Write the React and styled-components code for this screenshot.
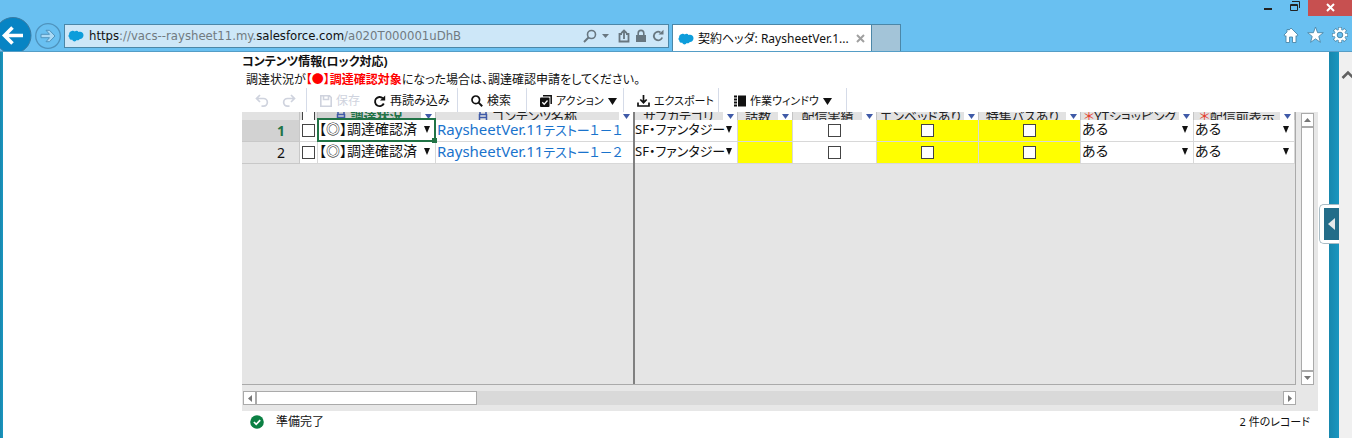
import React from "react";
import styled, { createGlobalStyle, css } from "styled-components";

const GlobalStyle = createGlobalStyle`
  *, *::before, *::after { box-sizing: border-box; }
  body {
    margin: 0;
    background: #fff;
    color: #111;
    font-family: "Noto Sans", "Noto Sans CJK JP", sans-serif;
    font-size: 12px;
    font-feature-settings: "palt";
  }
  button, select, input { font: inherit; font-feature-settings: inherit; color: inherit; }
  button { padding: 0; border: 0; background: none; display: flex; align-items: center; cursor: pointer; }
  svg { flex: none; }
`;

/* ---------- browser frame ---------- */

const Shell = styled.div`
  min-height: 100vh;
  display: flex;
  flex-direction: column;
`;

const TopBar = styled.header`
  height: 52px;
  display: flex;
  justify-content: space-between;
  background: #69c0f1;
  border-bottom: 1px solid #559dc6;
  overflow: hidden;
`;

const Navigation = styled.div`
  display: flex;
  padding-top: 17px;
`;

const BackButton = styled.button`
  width: 32px;
  height: 38px;
`;

const ForwardButton = styled.button`
  width: 32px;
  height: 38px;
  padding-left: 2px;
`;

const AddressBar = styled.div`
  width: 605px;
  height: 24px;
  margin-top: 7px;
  padding: 0 4px 0 3px;
  display: flex;
  align-items: center;
  gap: 5px;
  border: 1px solid #4b87a8;
  background: #cde7f8;
`;

const Url = styled.div`
  flex: 1;
  font-family: "DejaVu Sans Condensed", "Noto Sans", sans-serif;
  font-size: 13px;
  line-height: 22px;
  white-space: nowrap;
  color: #717a80;
  outline: none;
`;

const Strong = styled.span`
  color: #111;
`;

const AddressTools = styled.div`
  display: flex;
  align-items: center;
  gap: 5px;
`;

const Tab = styled.div`
  width: 200px;
  height: 28px;
  margin: 7px 0 0 3px;
  padding: 0 6px 0 5px;
  display: flex;
  align-items: center;
  gap: 4px;
  background: #fff;
  border: 1px solid #4b87a8;
  border-bottom: 0;
  font-size: 12px;
  line-height: 20px;
  white-space: nowrap;
`;

const TabTitle = styled.span`
  flex: 1;
`;

const NewTab = styled.button`
  width: 29px;
  height: 28px;
  margin-top: 7px;
  background: #a3c4d8;
  border: 1px solid #4b87a8;
  border-width: 1px 1px 0 0;
`;

const WindowArea = styled.div`
  display: flex;
  flex-direction: column;
  align-items: flex-end;
  gap: 10px;
`;

const WindowButtons = styled.div`
  display: flex;
  height: 16px;
`;

const WindowButton = styled.button`
  width: ${(p) => (p.$close ? 44 : 26)}px;
  height: 16px;
  padding-bottom: 2px;
  justify-content: center;
  background: ${(p) => (p.$close ? "#c75050" : "transparent")};
`;

const Shortcuts = styled.div`
  display: flex;
  gap: 8px;
  padding-right: 4px;
`;

const Body = styled.div`
  flex: 1;
  display: flex;
`;

const Edge = styled.div`
  width: ${(p) => p.$width}px;
  flex: none;
  position: relative;
  background: linear-gradient(90deg, #1787ad, #1a96c0);
`;

const PageScroll = styled.div`
  width: 13px;
  flex: none;
  padding-top: 15px;
  background: #f0f0f0;
`;

const SideHandle = styled.button`
  position: absolute;
  top: 152px;
  right: 0;
  width: 20px;
  height: 40px;
  padding: 4px 0 4px 4px;
  background: #fff;
  border: 1px solid #a9bcc5;
  border-right: 0;
  border-radius: 5px 0 0 5px;
`;

const HandleFace = styled.span`
  width: 15px;
  height: 32px;
  display: flex;
  align-items: center;
  justify-content: center;
  background: #236d89;
`;

/* ---------- page ---------- */

const Main = styled.main`
  flex: 1;
  min-width: 0;
  padding: 0 11px 0 239px;
  display: flex;
  flex-direction: column;
`;

const Title = styled.h1`
  margin: 0;
  padding-top: 1px;
  font-size: 12px;
  line-height: 18px;
  font-weight: 700;
`;

const Note = styled.p`
  margin: 0;
  padding-left: 4px;
  font-size: 12px;
  line-height: 17px;
`;

const Alert = styled.strong`
  color: #f00;
`;

const Toolbar = styled.div`
  height: 24px;
  display: flex;
`;

const ToolGroup = styled.div`
  width: ${(p) => p.$width}px;
  padding: 2px 0 0 13px;
  display: flex;
  align-items: center;
  gap: 13px;
  border-right: 1px solid #d5dbe8;
`;

const Tool = styled.button`
  gap: 4px;
  font-size: ${(p) => (p.$compact ? 11 : 12)}px;
  line-height: 18px;
  white-space: nowrap;
  color: ${(p) => (p.disabled ? "#cfd3de" : "#111")};
`;

const Sheet = styled.section`
  flex: 1;
  display: grid;
  grid-template-columns: 1fr 22px;
  grid-template-rows: 1fr 26px;
  background: #e7e7e7;
`;

const Viewport = styled.div`
  position: relative;
  overflow: hidden;
  border-right: 1px solid #aaa;
  border-bottom: 1px solid #aaa;
  background: #e5e5e5;
`;

const FreezeLine = styled.div`
  position: absolute;
  top: 0;
  bottom: 0;
  left: 391px;
  width: 2px;
  background: #808080;
`;

const Table = styled.table`
  width: 100%;
  table-layout: fixed;
  border-collapse: separate;
  border-spacing: 0;
  font-size: 14px;
`;

const Col = styled.col`
  width: ${(p) => (p.$width ? p.$width + "px" : "auto")};
`;

const HeadCell = styled.th`
  padding: 0;
  font-weight: 400;
  background: ${(p) => (p.$active ? "#d2d2d2" : "#e2e2e2")};
  color: ${(p) => (p.$active ? "#217346" : "#222")};
  border-right: 1px solid #c4c4c4;
`;

const HeadClip = styled.div`
  height: 8px;
  display: flex;
  align-items: center;
  overflow: hidden;
`;

const HeadText = styled.span`
  flex: 1;
  display: flex;
  align-items: center;
  justify-content: center;
  gap: 4px;
  font-size: 13px;
  line-height: 20px;
  font-weight: ${(p) => (p.$active ? 700 : 400)};
  white-space: nowrap;
`;

const Required = styled.span`
  color: #e5402f;
  margin-right: -4px;
`;

const FilterButton = styled.button`
  width: 14px;
  height: 8px;
  flex: none;
  justify-content: center;
  background: #fff;
`;

const cellLine = css`
  height: 22px;
  padding: 0;
  border-right: 1px solid #d8d8d8;
  border-bottom: 1px solid #d8d8d8;
`;

const RowHead = styled.th`
  ${cellLine}
  padding-right: 14px;
  text-align: right;
  font-weight: ${(p) => (p.$active ? 700 : 400)};
  color: ${(p) => (p.$active ? "#217346" : "#111")};
  background: ${(p) => (p.$active ? "#d2d2d2" : "#e4e4e4")};
  border-color: #c8c8c8;
  line-height: 20px;
`;

const Cell = styled.td`
  ${cellLine}
  position: relative;
  vertical-align: ${(p) => (p.$center ? "middle" : "top")};
  background: ${(p) => (p.$yellow ? "#ff0" : "#fff")};
  line-height: 18px;
  white-space: nowrap;
`;

const Selection = styled.span`
  position: absolute;
  z-index: 1;
  inset: -2px -1px -1px -1px;
  border: 2px solid #217346;
  pointer-events: none;
  &::after {
    content: "";
    position: absolute;
    right: -3px;
    bottom: -3px;
    width: 5px;
    height: 5px;
    background: #217346;
  }
`;

const Picker = styled.label`
  display: flex;
  align-items: center;
  padding-right: 5px;
`;

const Select = styled.select`
  flex: 1;
  min-width: 0;
  height: 18px;
  padding: 0 0 0 1px;
  appearance: none;
  border: 0;
  background: none;
  font-size: ${(p) => (p.$compact ? 13 : 14)}px;
  line-height: 18px;
  outline: none;
`;

const Check = styled.input`
  appearance: none;
  display: block;
  width: 13px;
  height: 13px;
  margin: 0 auto;
  flex: none;
  border: 1px solid #444;
  background: #fff;
`;

const RecordLink = styled.a`
  display: block;
  padding-left: 1px;
  font-size: 13px;
  color: #1a73cc;
  text-decoration: none;
`;

const Latin = styled.span`
  font-size: 15px;
`;

const VBar = styled.div`
  width: 13px;
  margin: 1px 0 0 5px;
  display: flex;
  flex-direction: column;
`;

const HBar = styled.div`
  height: 14px;
  margin: 6px 0 0 1px;
  display: flex;
  background: #d9d9d9;
`;

const ScrollButton = styled.button`
  width: 13px;
  height: 14px;
  flex: none;
  justify-content: center;
  background: #fff;
  border: 1px solid #aaa;
`;

const Thumb = styled.div`
  flex: ${(p) => (p.$width ? "none" : 1)};
  width: ${(p) => (p.$width ? p.$width + "px" : "auto")};
  background: #fff;
  border: 1px solid #aaa;
`;

const Spacer = styled.div`
  flex: 1;
`;

const Status = styled.footer`
  height: 27px;
  padding: 0 8px 6px;
  display: flex;
  align-items: center;
  gap: 12px;
  line-height: 18px;
`;

const RecordCount = styled.span`
  font-size: 11px;
`;

/* ---------- icons ---------- */

const Triangle = ({ dir = "down", w = 8, h = 6, fill = "#111" }) => {
  const d = {
    down: `M0 0H${w}L${w / 2} ${h}Z`,
    up: `M0 ${h}H${w}L${w / 2} 0Z`,
    left: `M${w} 0V${h}L0 ${h / 2}Z`,
    right: `M0 0V${h}L${w} ${h / 2}Z`,
  }[dir];
  return (
    <svg width={w} height={h} viewBox={`0 0 ${w} ${h}`} aria-hidden="true">
      <path d={d} fill={fill} />
    </svg>
  );
};

const Cloud = () => (
  <svg width="16" height="12" viewBox="0 0 16 12" aria-hidden="true">
    <path
      fill="#0d9ddb"
      d="M3.8 1C5 .4 6.200.9 6.800 1.500 8 .5 9.800.7 10.500 2 13.300 1 15.500 2.800 15.500 5.200S13.400 9.200 11.800 8.900C11 10.300 9.700 10.400 8.700 10 7.800 12 5 11.800 4.300 9.800 2.500 10 1.300 9 1.300 7.500.2 6.800.2 5.200 1.200 4.300.8 2.800 2 1.200 3.800 1Z"
    />
  </svg>
);

const BackIcon = () => (
  <svg width="32" height="38" viewBox="0 0 32 38" aria-hidden="true">
    <circle cx="13" cy="18.500" r="18" fill="#0784c4" stroke="#3a7ba3" />
    <path d="M23 18.500H5M12.500 10.500L4.500 18.500L12.500 26.500" fill="none" stroke="#fff" strokeWidth="3.600" />
  </svg>
);

const ForwardIcon = () => (
  <svg width="28" height="28" viewBox="0 0 28 28" aria-hidden="true">
    <circle cx="14" cy="14" r="12.300" fill="none" stroke="#4f93bd" strokeWidth="1.300" />
    <path
      d="M7 12.300H15.500L12 8.300H15.500L21 14L15.500 19.700H12L15.500 15.700H7Z"
      fill="#a9d9f5"
      stroke="#4f93bd"
    />
  </svg>
);

const gray = "#687780";

const AddressIcons = () => (
  <AddressTools>
    <svg width="14" height="14" viewBox="0 0 14 14" aria-hidden="true">
      <circle cx="8.500" cy="5.500" r="4" fill="none" stroke={gray} strokeWidth="1.600" />
      <path d="M5.500 8.500L1 13" stroke={gray} strokeWidth="2" />
    </svg>
    <Triangle w={7} h={4} fill={gray} />
    <svg width="16" height="14" viewBox="0 0 16 14" aria-hidden="true">
      <path d="M8 5H5.500V12.500H14.500V5H12M10 10V2M7.300 4.200L10 1.500L12.700 4.200" fill="none" stroke={gray} strokeWidth="1.800" />
    </svg>
    <svg width="12" height="14" viewBox="0 0 12 14" aria-hidden="true">
      <path d="M3.200 6V4.200A2.800 2.800 0 0 1 8.800 4.200V6" fill="none" stroke={gray} strokeWidth="1.600" />
      <rect x="1" y="6" width="10" height="7" fill={gray} />
    </svg>
    <svg width="12" height="14" viewBox="0 0 12 14" aria-hidden="true">
      <path d="M8.500 3.400A4.300 4.300 0 1 0 10.200 8.500" fill="none" stroke={gray} strokeWidth="1.800" />
      <path d="M6.500 5.500H11.500V.8Z" fill={gray} />
    </svg>
  </AddressTools>
);

const HomeIcon = () => (
  <svg width="16" height="18" viewBox="0 0 16 18" aria-hidden="true">
    <path
      d="M8 2L15 9L14 10.500L13 9.700V16.500H9.500V11H6.500V16.500H3V9.700L2 10.500L1 9L4 6V3.500H6V4.200Z"
      fill="#fff"
      stroke="#4b87a8"
      strokeWidth=".9"
    />
  </svg>
);

const StarIcon = () => (
  <svg width="17" height="18" viewBox="0 0 17 18" aria-hidden="true">
    <path
      d="M8.500 1L10.600 6.700H16.300L11.800 10.400L13.400 16.300L8.500 12.900L3.600 16.300L5.200 10.400L.7 6.700H6.400Z"
      fill="#fff"
      stroke="#4b87a8"
      strokeWidth=".9"
    />
  </svg>
);

const GearIcon = () => (
  <svg width="16" height="18" viewBox="0 0 16 18" aria-hidden="true">
    <g transform="translate(8 9)">
      {[
        ["#4b87a8", 4, 7.900],
        ["#fff", 2.600, 7.300],
      ].map(([c, w, r]) => (
        <g key={c} stroke={c} strokeWidth={w}>
          {[0, 45, 90, 135].map((a) => (
            <path key={a} d={`M0 ${-r}V${r}`} transform={`rotate(${a})`} />
          ))}
        </g>
      ))}
      <circle r="5.300" fill="#fff" />
      <circle r="2.800" fill="#69c0f1" stroke="#4b87a8" />
    </g>
  </svg>
);

const MinimizeIcon = () => (
  <svg width="10" height="14" viewBox="0 0 10 14" aria-hidden="true">
    <rect x="0" y="8" width="8" height="2" fill="#222" />
  </svg>
);

const RestoreIcon = () => (
  <svg width="12" height="14" viewBox="0 0 12 14" aria-hidden="true">
    <path d="M1.500 4.500H8.500V10.500H1.500ZM1 5.500H9M3 1.500H10.500V8" fill="none" stroke="#222" />
  </svg>
);

const CloseIcon = ({ color = "#fff", size = 9 }) => (
  <svg width={size} height={size} viewBox="0 0 9 9" aria-hidden="true">
    <path d="M1 1L8 8M8 1L1 8" stroke={color} strokeWidth="2" />
  </svg>
);

const UndoIcon = ({ flip }) => (
  <svg width="14" height="14" viewBox="0 0 14 14" aria-hidden="true">
    <g transform={flip ? "matrix(-1 0 0 1 14 0)" : undefined} fill="none" stroke="#cfd3de" strokeWidth="1.700">
      <path d="M5 1L1.500 4.500L5 8M2 4.500H8.500A3.800 3.800 0 0 1 8.500 12.200H6.500" />
    </g>
  </svg>
);

const SaveIcon = () => (
  <svg width="12" height="12" viewBox="0 0 12 12" aria-hidden="true">
    <path d="M.8.800H9.500L11.200 2.500V11.200H.8ZM3.500 1V4.500H8.500V1" fill="none" stroke="#cfd3de" strokeWidth="1.600" />
  </svg>
);

const ReloadIcon = () => (
  <svg width="13" height="13" viewBox="0 0 13 13" aria-hidden="true">
    <path d="M9.800 3.200A4.600 4.600 0 1 0 10.800 8.500" fill="none" stroke="#111" strokeWidth="1.900" />
    <path d="M7 5.600H12.200V.6Z" fill="#111" />
  </svg>
);

const SearchIcon = () => (
  <svg width="12" height="12" viewBox="0 0 12 12" aria-hidden="true">
    <circle cx="4.800" cy="4.800" r="3.800" fill="none" stroke="#111" strokeWidth="1.700" />
    <path d="M7.600 7.600L11.200 11.200" stroke="#111" strokeWidth="2" />
  </svg>
);

const ActionIcon = () => (
  <svg width="12" height="12" viewBox="0 0 12 12" aria-hidden="true">
    <path d="M3 .8H11.200V9" fill="none" stroke="#111" strokeWidth="1.500" />
    <rect x="0" y="2.500" width="9.500" height="9.500" rx="1" fill="#111" />
    <path d="M2.300 7.300L4.200 9.200L7.500 5.500" fill="none" stroke="#fff" strokeWidth="1.300" />
  </svg>
);

const ExportIcon = () => (
  <svg width="13" height="12" viewBox="0 0 13 12" aria-hidden="true">
    <path d="M6.500 0V7M3.300 4.500L6.500 7.700L9.700 4.500M1 7.500V11H12V7.500" fill="none" stroke="#111" strokeWidth="1.700" />
  </svg>
);

const PaneIcon = () => (
  <svg width="14" height="12" viewBox="0 0 14 12" aria-hidden="true">
    <path d="M2 1.500H5M2 4.500H5M2 7.500H5M2 10.500H5" stroke="#111" strokeWidth="2" />
    <rect x="6" y="0.500" width="8" height="11" fill="#111" />
  </svg>
);

const LockIcon = () => (
  <svg width="10" height="12" viewBox="0 0 10 12" aria-hidden="true">
    <path d="M2 0V4M8 0V4M1 4.500H9M1 7.500H9M1.500 4V12M8.500 4V12" fill="none" stroke="#3f5aa8" strokeWidth="1.500" />
  </svg>
);

const OkIcon = () => (
  <svg width="14" height="14" viewBox="0 0 14 14" aria-hidden="true">
    <circle cx="7" cy="7" r="6.800" fill="#0b8043" />
    <path d="M3.900 7L6.200 9.300L10.200 5.200" fill="none" stroke="#fff" strokeWidth="1.700" />
  </svg>
);

/* ---------- data ---------- */

const columns = [
  { label: "調達状況", width: 118, lock: true, active: true },
  { label: "コンテンツ名称", width: 198, lock: true },
  { label: "サブカテゴリ", width: 104 },
  { label: "話数", width: 55 },
  { label: "配信実績", width: 84 },
  { label: "エンベッドあり", width: 102 },
  { label: "特集バスあり", width: 102 },
  { label: "YTショッピング", width: 113, required: true },
  { label: "配信前表示", required: true },
];

const records = [
  { id: 1, latin: "RaysheetVer.11", rest: "テストー１－１" },
  { id: 2, latin: "RaysheetVer.11", rest: "テストー１－２" },
];

const Dropdown = ({ label, value, compact }) => (
  <Picker>
    <Select aria-label={label} defaultValue={value} $compact={compact}>
      <option>{value}</option>
    </Select>
    <Triangle w={6} h={7} />
  </Picker>
);

const Row = ({ record, active }) => (
  <tr>
    <RowHead scope="row" $active={active}>{record.id}</RowHead>
    <Cell $center>
      <Check type="checkbox" aria-label={`行 ${record.id}`} />
    </Cell>
    <Cell>
      <Dropdown label="調達状況" value="【◎】調達確認済" />
      {active && <Selection />}
    </Cell>
    <Cell>
      <RecordLink href="#record"><Latin>{record.latin}</Latin>{record.rest}</RecordLink>
    </Cell>
    <Cell>
      <Dropdown label="サブカテゴリ" value="SF・ファンタジー" compact />
    </Cell>
    <Cell $yellow />
    <Cell $center>
      <Check type="checkbox" aria-label="配信実績" />
    </Cell>
    <Cell $center $yellow>
      <Check type="checkbox" aria-label="エンベッドあり" />
    </Cell>
    <Cell $center $yellow>
      <Check type="checkbox" aria-label="特集バスあり" />
    </Cell>
    <Cell>
      <Dropdown label="YTショッピング" value="ある" />
    </Cell>
    <Cell>
      <Dropdown label="配信前表示" value="ある" />
    </Cell>
  </tr>
);

export default function App() {
  return (
    <Shell>
      <GlobalStyle />
      <TopBar>
        <Navigation>
          <BackButton aria-label="戻る"><BackIcon /></BackButton>
          <ForwardButton aria-label="進む"><ForwardIcon /></ForwardButton>
          <AddressBar>
            <Cloud />
            <Url role="textbox" aria-label="アドレス" contentEditable suppressContentEditableWarning spellCheck={false}>
              <Strong>https</Strong>://vacs--raysheet11.my.<Strong>salesforce.com</Strong>/a020T000001uDhB
            </Url>
            <AddressIcons />
          </AddressBar>
          <Tab>
            <Cloud />
            <TabTitle>契約ヘッダ: RaysheetVer.1...</TabTitle>
            <button aria-label="タブを閉じる"><CloseIcon color="#a0a0a0" /></button>
          </Tab>
          <NewTab aria-label="新しいタブ" />
        </Navigation>
        <WindowArea>
          <WindowButtons>
            <WindowButton aria-label="最小化"><MinimizeIcon /></WindowButton>
            <WindowButton aria-label="元に戻す"><RestoreIcon /></WindowButton>
            <WindowButton $close aria-label="閉じる"><CloseIcon /></WindowButton>
          </WindowButtons>
          <Shortcuts>
            <button aria-label="ホーム"><HomeIcon /></button>
            <button aria-label="お気に入り"><StarIcon /></button>
            <button aria-label="ツール"><GearIcon /></button>
          </Shortcuts>
        </WindowArea>
      </TopBar>

      <Body>
        <Edge $width={3} />
        <Main>
          <Title>コンテンツ情報(ロック対応)</Title>
          <Note>
            調達状況が<Alert>【●】調達確認対象</Alert>になった場合は、調達確認申請をしてください。
          </Note>
          <Toolbar>
            <ToolGroup $width={65}>
              <Tool disabled aria-label="元に戻す"><UndoIcon /></Tool>
              <Tool disabled aria-label="やり直し"><UndoIcon flip /></Tool>
            </ToolGroup>
            <ToolGroup $width={151}>
              <Tool disabled><SaveIcon />保存</Tool>
              <Tool><ReloadIcon />再読み込み</Tool>
            </ToolGroup>
            <ToolGroup $width={69}>
              <Tool><SearchIcon />検索</Tool>
            </ToolGroup>
            <ToolGroup $width={97}>
              <Tool $compact><ActionIcon />アクション<Triangle w={9} h={7} /></Tool>
            </ToolGroup>
            <ToolGroup $width={95}>
              <Tool $compact><ExportIcon />エクスポート</Tool>
            </ToolGroup>
            <ToolGroup $width={128}>
              <Tool $compact><PaneIcon />作業ウィンドウ<Triangle w={9} h={7} /></Tool>
            </ToolGroup>
          </Toolbar>

          <Sheet>
            <Viewport>
              <Table>
                <colgroup>
                  <Col $width={58} />
                  <Col $width={18} />
                  {columns.map((c) => <Col key={c.label} $width={c.width} />)}
                </colgroup>
                <thead>
                  <tr>
                    <HeadCell><HeadClip /></HeadCell>
                    <HeadCell>
                      <HeadClip><Check type="checkbox" aria-label="すべての行" /></HeadClip>
                    </HeadCell>
                    {columns.map((c) => (
                      <HeadCell key={c.label} scope="col" $active={c.active}>
                        <HeadClip>
                          <HeadText $active={c.active}>
                            {c.lock && <LockIcon />}
                            {c.required && <Required>＊</Required>}
                            {c.label}
                          </HeadText>
                          <FilterButton aria-label={`${c.label}のフィルター`}>
                            <Triangle w={7} h={5} fill="#3f5aa8" />
                          </FilterButton>
                        </HeadClip>
                      </HeadCell>
                    ))}
                  </tr>
                </thead>
                <tbody>
                  {records.map((r, i) => <Row key={r.id} record={r} active={i === 0} />)}
                </tbody>
              </Table>
              <FreezeLine />
            </Viewport>
            <VBar>
              <ScrollButton aria-label="上へ"><Triangle dir="up" w={7} h={4} fill="#777" /></ScrollButton>
              <Thumb />
              <ScrollButton aria-label="下へ"><Triangle w={7} h={4} fill="#777" /></ScrollButton>
            </VBar>
            <HBar>
              <ScrollButton aria-label="左へ"><Triangle dir="left" w={4} h={7} fill="#777" /></ScrollButton>
              <Thumb $width={221} />
              <Spacer />
              <ScrollButton aria-label="右へ"><Triangle dir="right" w={4} h={7} fill="#777" /></ScrollButton>
            </HBar>
          </Sheet>

          <Status>
            <OkIcon />
            <span>準備完了</span>
            <Spacer />
            <RecordCount>2 件のレコード</RecordCount>
          </Status>
        </Main>
        <Edge $width={10}>
          <SideHandle aria-label="サイドバーを開く">
            <HandleFace><Triangle dir="left" w={7} h={12} fill="#e4e8ea" /></HandleFace>
          </SideHandle>
        </Edge>
        <PageScroll>
          <svg width="13" height="10" viewBox="0 0 13 10" aria-hidden="true">
            <path d="M3.500 8L9 2.500L14.500 8" fill="none" stroke="#606060" strokeWidth="2.600" />
          </svg>
        </PageScroll>
      </Body>
    </Shell>
  );
}
